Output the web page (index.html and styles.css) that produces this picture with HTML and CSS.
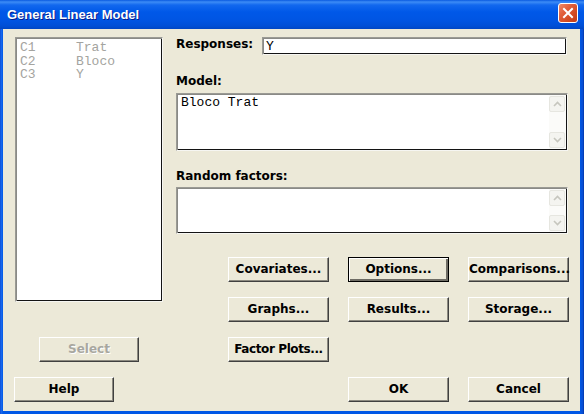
FILE: index.html
```html
<!DOCTYPE html>
<html>
<head>
<meta charset="utf-8">
<title>General Linear Model</title>
<link rel="stylesheet" href="styles.css">
</head>
<body>
<div class="window">
  <div class="titlebar">
    <span class="title">General Linear Model</span>
    <div class="close"><svg width="12" height="12" viewBox="0 0 12 12"><path d="M2 2 L10 10 M10 2 L2 10" stroke="#fff" stroke-width="2" stroke-linecap="square"/></svg></div>
  </div>
  <div class="content">
    <div class="main">
      <div class="leftcol">
        <div class="listbox sunken">
          <div class="lrow"><span class="cid">C1</span><span>Trat</span></div>
          <div class="lrow"><span class="cid">C2</span><span>Bloco</span></div>
          <div class="lrow"><span class="cid">C3</span><span>Y</span></div>
        </div>
        <button class="btn select" disabled>Select</button>
      </div>
      <div class="rightcol">
        <div class="resp">
          <span class="lbl resp-lbl">Responses:</span>
          <div class="field sunken">Y</div>
        </div>
        <div class="lbl model-lbl">Model:</div>
        <div class="area model sunken">
          <div class="atext">Bloco Trat</div>
          <div class="vscroll">
            <div class="sbtn"><svg width="9" height="6" viewBox="0 0 9 6"><path d="M1 5 L4.5 1.5 L8 5" fill="none" stroke="#C6C6BE" stroke-width="1.6"/></svg></div>
            <div class="track"></div>
            <div class="sbtn"><svg width="9" height="6" viewBox="0 0 9 6"><path d="M1 1 L4.5 4.5 L8 1" fill="none" stroke="#C6C6BE" stroke-width="1.6"/></svg></div>
          </div>
        </div>
        <div class="lbl random-lbl">Random factors:</div>
        <div class="area random sunken">
          <div class="atext"></div>
          <div class="vscroll">
            <div class="sbtn"><svg width="9" height="6" viewBox="0 0 9 6"><path d="M1 5 L4.5 1.5 L8 5" fill="none" stroke="#C6C6BE" stroke-width="1.6"/></svg></div>
            <div class="track"></div>
            <div class="sbtn"><svg width="9" height="6" viewBox="0 0 9 6"><path d="M1 1 L4.5 4.5 L8 1" fill="none" stroke="#C6C6BE" stroke-width="1.6"/></svg></div>
          </div>
        </div>
        <div class="btngrid">
          <button class="btn">Covariates...</button>
          <button class="btn default">Options...</button>
          <button class="btn">Comparisons...</button>
          <button class="btn">Graphs...</button>
          <button class="btn">Results...</button>
          <button class="btn">Storage...</button>
          <button class="btn narrow">Factor Plots...</button>
        </div>
      </div>
    </div>
    <div class="bottom">
      <button class="btn help">Help</button>
      <button class="btn ok">OK</button>
      <button class="btn cancel">Cancel</button>
    </div>
  </div>
</div>
</body>
</html>
```
FILE: styles.css
```css
* { box-sizing: border-box; }
body { margin: 0; background: #0055E5; }

.window {
  width: 584px;
  height: 414px;
  display: flex;
  flex-direction: column;
  background: linear-gradient(to right, #0842C8 0, #1E6CF0 1px, #0058E6 3px, #0058E6 calc(100% - 4px), #0A4CD0 calc(100% - 1px), #00309C 100%);
}

.titlebar {
  flex: none;
  height: 29px;
  display: flex;
  align-items: center;
  justify-content: space-between;
  padding: 0 6px 0 7px;
  background: linear-gradient(to bottom, #0A5AE0 0, #3D8CF6 2px, #1268EE 5px, #0058E8 12px, #0055E3 20px, #004FD6 26px, #0046C4 29px);
}

.title {
  font-family: "Liberation Sans", Arial, sans-serif;
  font-weight: bold;
  font-size: 13px;
  color: #fff;
  text-shadow: 1px 1px 0 #0A1E8C;
}

.close {
  align-self: flex-start;
  margin-top: 3px;
  width: 20px;
  height: 20px;
  border: 1px solid #fff;
  border-radius: 3px;
  background: linear-gradient(135deg, #EE8A6A 0, #E2603C 35%, #D24A22 70%, #C03D1A 100%);
  display: flex;
  align-items: center;
  justify-content: center;
}

.content {
  flex: 1;
  margin: 0 4px 3px 3px;
  background: #ECE9D8;
  padding: 8px 11px 0 12px;
  display: flex;
  flex-direction: column;
  font-family: "DejaVu Sans", Verdana, sans-serif;
}

.main { display: flex; }

.leftcol {
  width: 148px;
  display: flex;
  flex-direction: column;
  align-items: flex-start;
}

.sunken {
  background: #fff;
  border: 1px solid;
  border-color: #9A9A94 #F6F6F2 #F6F6F2 #9A9A94;
  box-shadow: inset 1px 1px 0 #8A8A86, inset -1px -1px 0 #141414;
}

.listbox {
  width: 148px;
  height: 265px;
  padding: 3px 4px;
  font-family: "Liberation Mono", "Courier New", monospace;
  font-size: 13px;
  line-height: 13.5px;
  color: #A4A4A0;
}

.lrow { display: flex; }
.cid { width: 56px; }

.rightcol {
  margin-left: 13px;
  width: 392px;
  display: flex;
  flex-direction: column;
}

.lbl {
  font-weight: bold;
  font-size: 12px;
  line-height: 14px;
  color: #000;
}

.resp { display: flex; height: 18px; align-items: flex-start; }
.resp-lbl { width: 86px; }
.field {
  width: 305px;
  height: 18px;
  padding: 1px 3px;
  font-family: "Liberation Mono", "Courier New", monospace;
  font-size: 13px;
  line-height: 15px;
}

.model-lbl { margin-top: 19px; }
.random-lbl { margin-top: 18px; }

.area {
  display: flex;
  padding: 1px;
}
.area.model { margin-top: 5px; height: 58px; }
.area.random { margin-top: 4px; height: 47px; }

.atext {
  flex: 1;
  padding: 1px 3px;
  font-family: "Liberation Mono", "Courier New", monospace;
  font-size: 13px;
  line-height: 14px;
}

.vscroll {
  width: 17px;
  display: flex;
  flex-direction: column;
  padding: 1px 1px 1px 0;
  background: #FBFBF9;
}
.sbtn {
  width: 16px;
  height: 16px;
  border: 1px solid #E6E6E0;
  border-radius: 2px;
  background: #F4F4F0;
  display: flex;
  align-items: center;
  justify-content: center;
}
.track { flex: 1; }

.btngrid {
  margin: 23px 0 0 52px;
  display: grid;
  grid-template-columns: repeat(3, 101px);
  column-gap: 19px;
  row-gap: 15px;
}

.btn {
  height: 25px;
  width: 101px;
  padding: 0 0 1px;
  background: #ECE9D8;
  border: 1px solid;
  border-color: #FFFFFF #404040 #404040 #FFFFFF;
  box-shadow: inset -1px -1px 0 #8C8A80;
  font-family: "DejaVu Sans", Verdana, sans-serif;
  font-weight: bold;
  font-size: 12px;
  color: #000;
  line-height: 20px;
}

.btn.narrow { letter-spacing: -0.4px; }

.btn.default {
  border: 1px solid #000;
  box-shadow: inset 1px 1px 0 #fff, inset -2px -2px 0 #6E6C64;
}

.btn:disabled {
  color: #A8A79F;
  text-shadow: 1px 1px 0 #fff;
}

.select {
  margin: 35px 0 0 24px;
  width: 100px;
}

.bottom {
  display: flex;
  margin-top: 15px;
}
.help { width: 100px; margin-left: -1px; }
.ok { margin-left: auto; }
.cancel { margin-left: 19px; }
```
